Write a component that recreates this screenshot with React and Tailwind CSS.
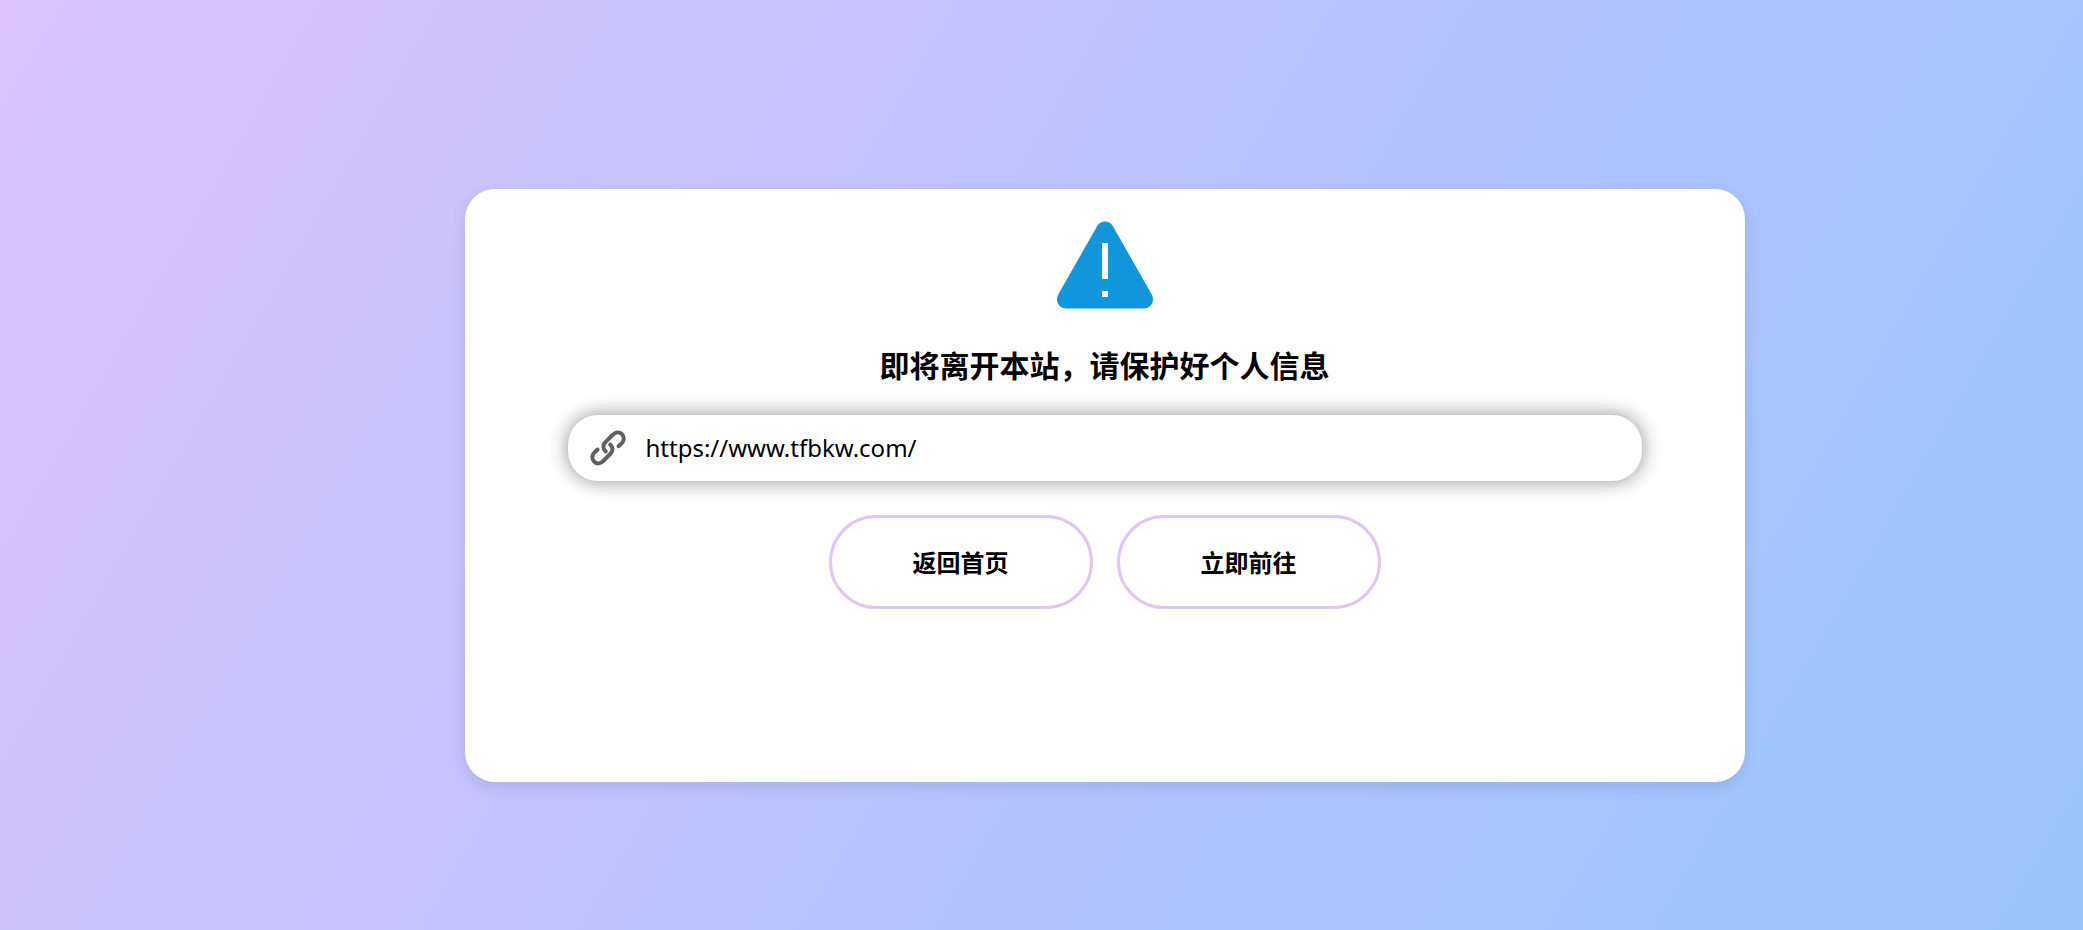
// App.jsx - Notice shown before leaving the site
import { useState } from 'react'

function WarningIcon() {
  return (
    <svg viewBox="0 0 96 88" className="w-24 h-[88px]" aria-hidden="true">
      <path
        fill="#1296db"
        d="M40.500 4.500C43.800 -1 52.200 -1 55.500 4.500L94.500 73C98.500 80.500 94 87.500 86.500 87.500H9.500C2 87.500 -2.500 80.500 1.500 73Z"
      />
      <path fill="#fff" d="M45 22h6v36h-6zM45 70h6v6h-6z" />
    </svg>
  )
}

function LinkIcon() {
  return (
    <svg
      viewBox="0 0 36 36"
      className="w-9 h-9 shrink-0"
      fill="none"
      stroke="#606060"
      strokeWidth="4"
      strokeLinecap="round"
      aria-hidden="true"
    >
      <path d="M15.800 21.500C12.600 18.500 12.800 15 15.200 12.400L22.400 5.100C25.400 2.100 29.200 1.500 31.800 4C34.600 6.800 34.400 10.700 31.500 13.600L28.500 16.200" />
      <path d="M20.200 14.500C23.400 17.600 23.200 20.900 20.600 23.500L13.700 30.600C10.600 33.800 6.900 34.400 4.200 31.800C1.500 29.200 1.800 25.100 4.700 22.200L7.600 19.500" />
    </svg>
  )
}

function ActionButton({ children, onClick }) {
  return (
    <button
      type="button"
      onClick={onClick}
      className="px-[81px] py-7 border-3 border-[#dfc6f5] rounded-full text-2xl font-bold text-black bg-white cursor-pointer"
    >
      {children}
    </button>
  )
}

function App() {
  const [url, setUrl] = useState('https://www.tfbkw.com/')

  function goHome() {
    window.location.href = '/'
  }

  function goTarget() {
    window.location.href = url
  }

  return (
    <div className="min-h-screen pl-[126px] pt-[189px] pb-12 bg-[linear-gradient(120deg,#dcc3fc_0%,#b2c3fe_60%,#98c5fc_100%)] font-['Noto_Sans_CJK_SC',sans-serif]">
      <main className="w-full max-w-7xl mx-auto pt-8 pb-[173px] flex flex-col items-center bg-white rounded-[30px] shadow-[0_5px_15px_rgba(0,0,0,0.1)]">
        <WarningIcon />
        <h1 className="mt-[33px] text-3xl leading-[44px] font-bold text-black">即将离开本站，请保护好个人信息</h1>
        <div className="w-full mt-[29px] px-[103px]">
          <label className="flex items-center gap-5 h-[66px] px-[22px] bg-white rounded-[30px] shadow-[0_0_20px_rgba(0,0,0,0.45)]">
            <LinkIcon />
            <input
              type="text"
              aria-label="URL"
              value={url}
              onChange={function (e) { setUrl(e.target.value) }}
              className="flex-1 min-w-0 text-2xl text-black outline-none font-['Noto_Sans','Noto_Sans_CJK_SC',sans-serif]"
            />
          </label>
        </div>
        <div className="mt-[34px] flex flex-wrap justify-center gap-6">
          <ActionButton onClick={goHome}>返回首页</ActionButton>
          <ActionButton onClick={goTarget}>立即前往</ActionButton>
        </div>
      </main>
    </div>
  )
}

export default App
